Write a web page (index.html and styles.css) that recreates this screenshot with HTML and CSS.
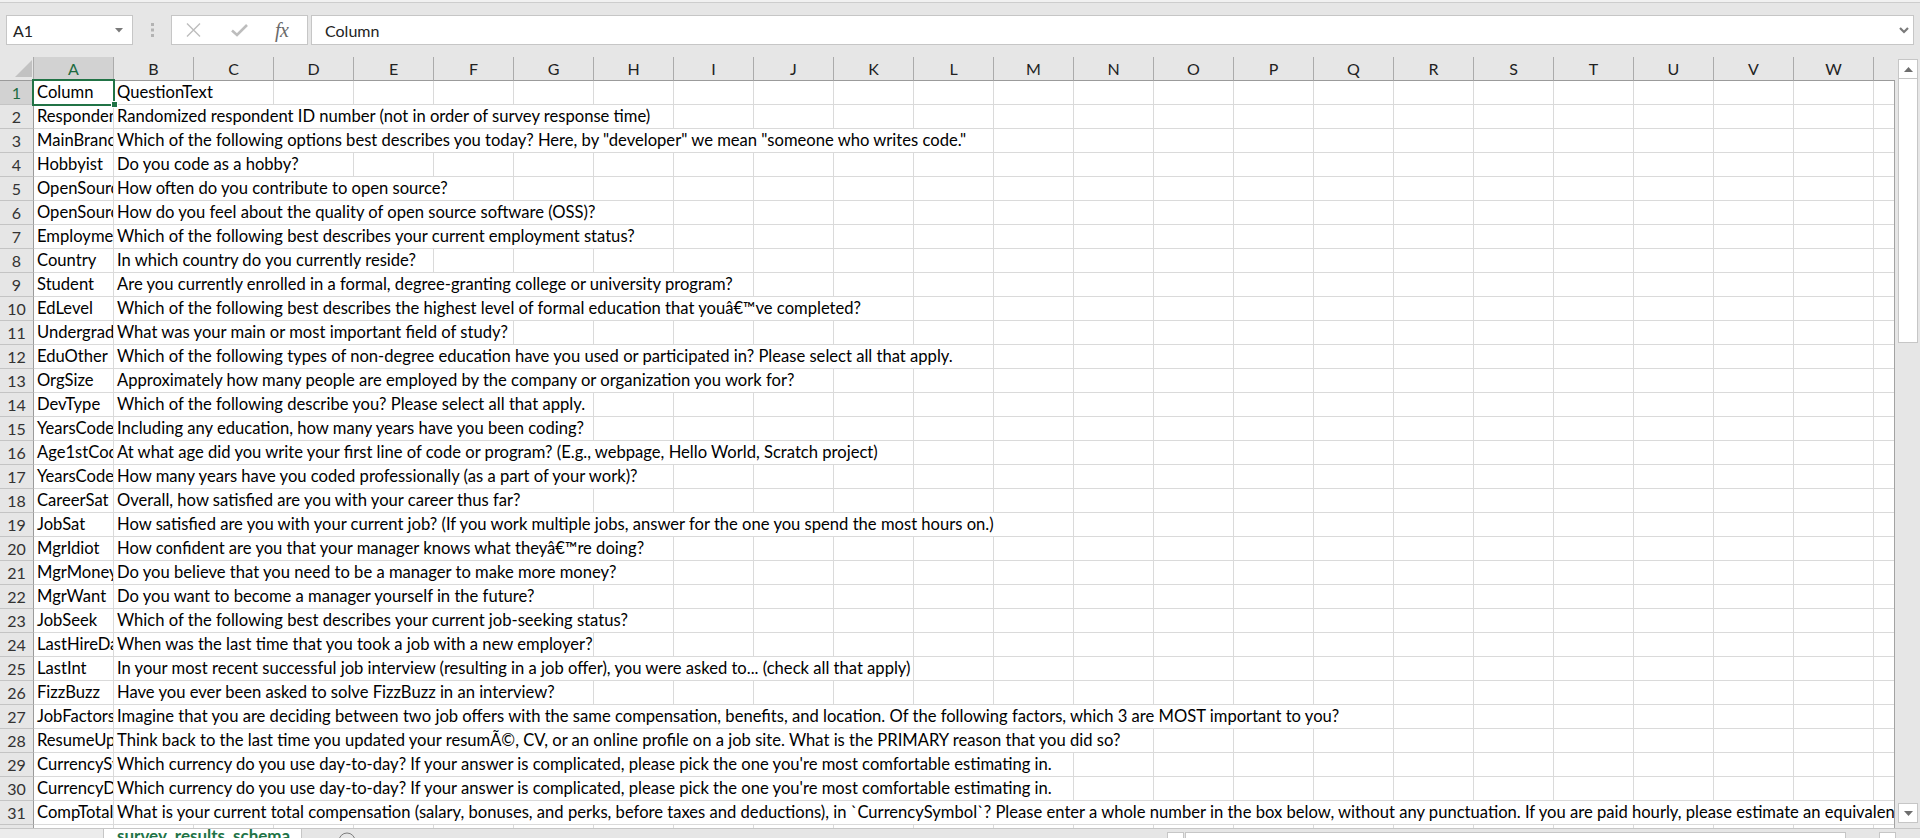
FILE: index.html
```html
<!DOCTYPE html>
<html lang="en">
<head>
<meta charset="utf-8">
<title>survey_results_schema</title>
<link rel="stylesheet" href="styles.css">
</head>
<body>
<div class="topstrip"></div>
<div class="fbar">
  <div class="namebox"><span>A1</span><svg class="nb-arrow" width="8" height="5" viewBox="0 0 8 5"><path d="M0 0H8L4 4.5Z" fill="#7a7a7a"/></svg></div>
  <div class="grip"><svg width="5" height="14" viewBox="0 0 5 14"><rect x="1" y="0" width="3" height="3" fill="#b3b3b3"/><rect x="1" y="5.5" width="3" height="3" fill="#b3b3b3"/><rect x="1" y="11" width="3" height="3" fill="#b3b3b3"/></svg></div>
  <div class="fbtns">
    <svg class="ic-x" width="15" height="14" viewBox="0 0 15 14"><path d="M1 0.5L14 13.5M14 0.5L1 13.5" stroke="#bdbdbd" stroke-width="1.4" fill="none"/></svg>
    <svg class="ic-ok" width="17" height="13" viewBox="0 0 17 13"><path d="M1 6.5L6 11L16 1" stroke="#bdbdbd" stroke-width="2.6" fill="none"/></svg>
    <span class="fx">fx</span>
  </div>
  <div class="finput"><span>Column</span><svg width="10" height="7" viewBox="0 0 10 7"><path d="M1 1L5 5L9 1" stroke="#7a7a7a" stroke-width="2.2" fill="none"/></svg></div>
</div>
<div class="main">
  <div class="sheet">
    <div class="colheads">
      <div class="corner"><svg width="33" height="23" viewBox="0 0 33 23"><path d="M15 20H32V3Z" fill="#c2c2c2"/></svg></div>
      <div class="ch sel">A</div><div class="ch">B</div><div class="ch">C</div><div class="ch">D</div><div class="ch">E</div><div class="ch">F</div><div class="ch">G</div><div class="ch">H</div><div class="ch">I</div><div class="ch">J</div><div class="ch">K</div><div class="ch">L</div><div class="ch">M</div><div class="ch">N</div><div class="ch">O</div><div class="ch">P</div><div class="ch">Q</div><div class="ch">R</div><div class="ch">S</div><div class="ch">T</div><div class="ch">U</div><div class="ch">V</div><div class="ch">W</div><div class="ch last"></div>
    </div>
    <div class="rows">
      <div class="row"><div class="rh sel">1</div><div class="cells"><div class="ca">Column</div><div class="cb"><span>QuestionText</span></div></div></div>
      <div class="row"><div class="rh">2</div><div class="cells"><div class="ca">Respondent</div><div class="cb"><span>Randomized respondent ID number (not in order of survey response time)</span></div></div></div>
      <div class="row"><div class="rh">3</div><div class="cells"><div class="ca">MainBranch</div><div class="cb"><span>Which of the following options best describes you today? Here, by "developer" we mean "someone who writes code."</span></div></div></div>
      <div class="row"><div class="rh">4</div><div class="cells"><div class="ca">Hobbyist</div><div class="cb"><span>Do you code as a hobby?</span></div></div></div>
      <div class="row"><div class="rh">5</div><div class="cells"><div class="ca">OpenSourcer</div><div class="cb"><span>How often do you contribute to open source?</span></div></div></div>
      <div class="row"><div class="rh">6</div><div class="cells"><div class="ca">OpenSource</div><div class="cb"><span>How do you feel about the quality of open source software (OSS)?</span></div></div></div>
      <div class="row"><div class="rh">7</div><div class="cells"><div class="ca">Employment</div><div class="cb"><span>Which of the following best describes your current employment status?</span></div></div></div>
      <div class="row"><div class="rh">8</div><div class="cells"><div class="ca">Country</div><div class="cb"><span>In which country do you currently reside?</span></div></div></div>
      <div class="row"><div class="rh">9</div><div class="cells"><div class="ca">Student</div><div class="cb"><span>Are you currently enrolled in a formal, degree-granting college or university program?</span></div></div></div>
      <div class="row"><div class="rh">10</div><div class="cells"><div class="ca">EdLevel</div><div class="cb"><span>Which of the following best describes the highest level of formal education that youâ€™ve completed?</span></div></div></div>
      <div class="row"><div class="rh">11</div><div class="cells"><div class="ca">UndergradMajor</div><div class="cb"><span>What was your main or most important field of study?</span></div></div></div>
      <div class="row"><div class="rh">12</div><div class="cells"><div class="ca">EduOther</div><div class="cb"><span>Which of the following types of non-degree education have you used or participated in? Please select all that apply.</span></div></div></div>
      <div class="row"><div class="rh">13</div><div class="cells"><div class="ca">OrgSize</div><div class="cb"><span>Approximately how many people are employed by the company or organization you work for?</span></div></div></div>
      <div class="row"><div class="rh">14</div><div class="cells"><div class="ca">DevType</div><div class="cb"><span>Which of the following describe you? Please select all that apply.</span></div></div></div>
      <div class="row"><div class="rh">15</div><div class="cells"><div class="ca">YearsCode</div><div class="cb"><span>Including any education, how many years have you been coding?</span></div></div></div>
      <div class="row"><div class="rh">16</div><div class="cells"><div class="ca">Age1stCode</div><div class="cb"><span>At what age did you write your first line of code or program? (E.g., webpage, Hello World, Scratch project)</span></div></div></div>
      <div class="row"><div class="rh">17</div><div class="cells"><div class="ca">YearsCodePro</div><div class="cb"><span>How many years have you coded professionally (as a part of your work)?</span></div></div></div>
      <div class="row"><div class="rh">18</div><div class="cells"><div class="ca">CareerSat</div><div class="cb"><span>Overall, how satisfied are you with your career thus far?</span></div></div></div>
      <div class="row"><div class="rh">19</div><div class="cells"><div class="ca">JobSat</div><div class="cb"><span>How satisfied are you with your current job? (If you work multiple jobs, answer for the one you spend the most hours on.)</span></div></div></div>
      <div class="row"><div class="rh">20</div><div class="cells"><div class="ca">MgrIdiot</div><div class="cb"><span>How confident are you that your manager knows what theyâ€™re doing?</span></div></div></div>
      <div class="row"><div class="rh">21</div><div class="cells"><div class="ca">MgrMoney</div><div class="cb"><span>Do you believe that you need to be a manager to make more money?</span></div></div></div>
      <div class="row"><div class="rh">22</div><div class="cells"><div class="ca">MgrWant</div><div class="cb"><span>Do you want to become a manager yourself in the future?</span></div></div></div>
      <div class="row"><div class="rh">23</div><div class="cells"><div class="ca">JobSeek</div><div class="cb"><span>Which of the following best describes your current job-seeking status?</span></div></div></div>
      <div class="row"><div class="rh">24</div><div class="cells"><div class="ca">LastHireDate</div><div class="cb"><span>When was the last time that you took a job with a new employer?</span></div></div></div>
      <div class="row"><div class="rh">25</div><div class="cells"><div class="ca">LastInt</div><div class="cb"><span>In your most recent successful job interview (resulting in a job offer), you were asked to... (check all that apply)</span></div></div></div>
      <div class="row"><div class="rh">26</div><div class="cells"><div class="ca">FizzBuzz</div><div class="cb"><span>Have you ever been asked to solve FizzBuzz in an interview?</span></div></div></div>
      <div class="row"><div class="rh">27</div><div class="cells"><div class="ca">JobFactors</div><div class="cb"><span>Imagine that you are deciding between two job offers with the same compensation, benefits, and location. Of the following factors, which 3 are MOST important to you?</span></div></div></div>
      <div class="row"><div class="rh">28</div><div class="cells"><div class="ca">ResumeUpdate</div><div class="cb"><span>Think back to the last time you updated your resumÃ©, CV, or an online profile on a job site. What is the PRIMARY reason that you did so?</span></div></div></div>
      <div class="row"><div class="rh">29</div><div class="cells"><div class="ca">CurrencySymbol</div><div class="cb"><span>Which currency do you use day-to-day? If your answer is complicated, please pick the one you're most comfortable estimating in.</span></div></div></div>
      <div class="row"><div class="rh">30</div><div class="cells"><div class="ca">CurrencyDesc</div><div class="cb"><span>Which currency do you use day-to-day? If your answer is complicated, please pick the one you're most comfortable estimating in.</span></div></div></div>
      <div class="row"><div class="rh">31</div><div class="cells"><div class="ca">CompTotal</div><div class="cb"><span>What is your current total compensation (salary, bonuses, and perks, before taxes and deductions), in `CurrencySymbol`? Please enter a whole number in the box below, without any punctuation. If you are paid hourly, please estimate an equivalent weekly, monthly, or yearly salary. If you prefer not to answer, please leave the box empty.</span></div></div></div>
      <div class="row partial"><div class="rh"></div><div class="cells"><div class="ca"></div></div></div>
    </div>
    <div class="selbox"><span class="handle"></span></div>
  </div>
  <div class="vscroll">
    <div class="vbtn"><svg width="9" height="5" viewBox="0 0 9 5"><path d="M0 5H9L4.5 0Z" fill="#6e6e6e"/></svg></div>
    <div class="vthumb"></div>
    <div class="vtrack"></div>
    <div class="vbtn"><svg width="9" height="5" viewBox="0 0 9 5"><path d="M0 0H9L4.5 5Z" fill="#6e6e6e"/></svg></div>
  </div>
</div>
<div class="tabbar">
  <div class="navseg"></div>
  <div class="tab">survey_results_schema</div>
  <div class="addsheet"><svg width="18" height="18" viewBox="0 0 18 18"><circle cx="9" cy="9" r="8" fill="none" stroke="#7d7d7d" stroke-width="1"/></svg></div>
  <div class="tabspacer"></div>
  <div class="hgrip"><svg width="3" height="8" viewBox="0 0 3 8"><rect x="0" y="3" width="3" height="3" fill="#9a9a9a"/></svg></div>
  <div class="hbtn"></div>
  <div class="htrack"></div>
  <div class="hgap"></div>
  <div class="hbtn"></div>
  <div class="hend"></div>
</div>
<script src="script.js"></script>
</body>
</html>
```

FILE: styles.css
```css
* { box-sizing: border-box; margin: 0; padding: 0; }
html, body { width: 1920px; height: 838px; overflow: hidden; }
body {
  background: #e6e6e6;
  font-family: Lato, "Liberation Sans", sans-serif;
  color: #000;
}

/* top strip + formula bar */
.topstrip { height: 3px; background: #f1f1f1; border-bottom: 1px solid #cdcdcd; }
.fbar { display: flex; height: 30px; margin: 12px 0 12px 6px; }
.namebox {
  width: 127px; flex: none;
  border: 1px solid #c6c6c6; background: #fff;
  display: flex; align-items: center; justify-content: space-between;
  padding: 0 9px 0 6px;
  font-size: 16px; color: #222;
}
.nb-arrow { margin-top: 1px; }
.grip { width: 38px; flex: none; display: flex; align-items: center; justify-content: center; }
.fbtns {
  width: 137px; flex: none;
  border: 1px solid #c6c6c6; background: #fff;
  display: flex; align-items: center;
  padding-left: 14px;
}
.ic-x { margin-right: 30px; }
.ic-ok { margin-right: 27px; }
.fx {
  font-family: "Liberation Serif", "DejaVu Serif", serif;
  font-style: italic; font-size: 20px; color: #6a6a6a;
  letter-spacing: -0.5px; line-height: 20px;
}
.finput {
  flex: 1; margin: 0 6px 0 3px;
  border: 1px solid #c6c6c6; background: #fff;
  display: flex; align-items: center; justify-content: space-between;
  padding: 0 4px 0 13px;
  font-size: 16px; color: #222;
}

/* main sheet */
.main { display: flex; height: 771px; }
.sheet { width: 1895px; flex: none; position: relative; overflow: hidden; }
.colheads { display: flex; height: 24px; background: #e6e6e6; }
.corner { width: 34px; flex: none; border-right: 1px solid #ababab; border-bottom: 1px solid #9b9b9b; }
.corner svg { display: block; }
.ch {
  width: 80px; flex: none;
  border-right: 1px solid #ababab; border-bottom: 1px solid #9b9b9b;
  text-align: center; font-size: 16px; line-height: 23px; color: #222;
}
.ch.sel { background: #d2d2d2; color: #1e6b41; }
.ch.last { width: 21px; border-right: none; }

.rows { border-right: 1px solid #a3a3a3; }
.row { display: flex; height: 24px; }
.rh {
  width: 34px; flex: none;
  background: #e6e6e6;
  border-right: 1px solid #9b9b9b; border-bottom: 1px solid #c4c4c4;
  text-align: center; font-size: 16px; line-height: 23px; color: #333;
  overflow: hidden;
}
.rh.sel { background: #d2d2d2; color: #1e6b41; }
.cells {
  flex: 1; display: flex; overflow: hidden;
  border-bottom: 1px solid #dadada;
  background: repeating-linear-gradient(90deg, #fff 0 79px, #dadada 79px 80px);
}
.ca, .cb {
  flex: none; height: 23px;
  white-space: nowrap; padding-left: 3px;
  font-size: 16.6px; line-height: 22px; background: #fff;
}
.ca { width: 80px; border-right: 1px solid #dadada; overflow: hidden; }
.cb { width: calc(var(--span, 2) * 80px - 1px); }
.row.partial { height: 3px; }
.row.partial .rh { border-bottom: none; }
.row.partial .cells { border-bottom: none; }
.row.partial .ca { height: 3px; }

.selbox {
  position: absolute; left: 32px; top: 22px;
  width: 83px; height: 27px;
  border: 2px solid #217346;
}
.handle {
  position: absolute; left: 77px; top: 20px;
  width: 7px; height: 7px;
  background: #217346; border: 1px solid #fff;
}

/* vertical scrollbar */
.vscroll { flex: 1; display: flex; flex-direction: column; padding: 2px 2px 5px 3px; }
.vbtn {
  height: 20px; flex: none;
  border: 1px solid #c6c6c6; background: #fff;
  display: flex; align-items: center; justify-content: center;
}
.vthumb { height: 264px; flex: none; border: 1px solid #c6c6c6; border-top: none; background: #fff; }
.vtrack { flex: 1; }

/* sheet tabs */
.tabbar { display: flex; height: 10px; border-top: 1px solid #c6c6c6; overflow: hidden; }
.navseg { width: 103px; flex: none; background: #ececec; }
.tab {
  width: 199px; flex: none;
  background: #fff; margin-top: -1px;
  border-left: 1px solid #c6c6c6; border-right: 1px solid #c6c6c6;
  padding-left: 13px; padding-top: 1px;
  color: #217346; font-weight: bold; font-size: 17px; line-height: 14px;
}
.addsheet { margin-left: 36px; padding-top: 3px; }
.addsheet svg { display: block; }
.tabspacer { flex: 1; }
.hgrip { width: 17px; flex: none; }
.hbtn { width: 17px; flex: none; margin-top: 3px; border: 1px solid #c6c6c6; border-bottom: none; background: #fff; }
.htrack { width: 661px; flex: none; margin: 3px 0 0 1px; border: 1px solid #c6c6c6; border-bottom: none; background: #fff; }
.hgap { width: 33px; flex: none; }
.hend { width: 24px; flex: none; }
```

FILE: script.js
```js
document.querySelectorAll('.cb').forEach(function (cell) {
  var text = cell.querySelector('span');
  var w = text.getBoundingClientRect().width + 4;
  var n = Math.ceil(w / 80);
  if (n < 1) n = 1;
  if (n > 23) n = 23;
  cell.style.setProperty('--span', n);
});
```
